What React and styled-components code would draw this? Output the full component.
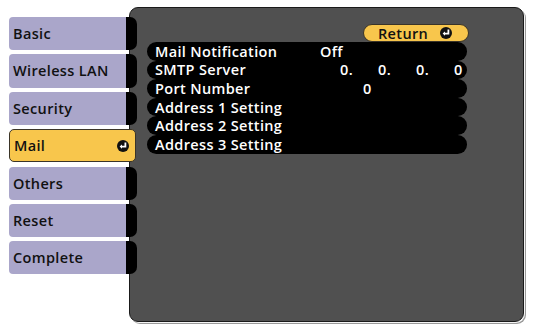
import React from "react";
import styled, { createGlobalStyle } from "styled-components";

const Global = createGlobalStyle`
  html, body { margin: 0; padding: 0; background: #ffffff; }
  body { font-family: "Open Sans", "DejaVu Sans", sans-serif; }
`;

const Screen = styled.div`
  display: flex;
  align-items: flex-start;
  width: 534px;
  height: 327px;
  padding: 7px 0 0 9px;
  box-sizing: border-box;
`;

const TabColumn = styled.div`
  display: flex;
  flex-direction: column;
  gap: 4.2px;
  width: 128px;
  padding-top: 10px;
  position: relative;
  z-index: 2;
  flex: none;
`;

const Tab = styled.div`
  box-sizing: border-box;
  height: 33.2px;
  width: ${(p) => (p.$active ? "127px" : "128px")};
  display: flex;
  align-items: center;
  justify-content: space-between;
  padding: 0 6px 0 4px;
  font-size: 14.5px;
  font-weight: 600;
  letter-spacing: 0.35px;
  color: #111;
  border-radius: ${(p) => (p.$active ? "5px" : "4px 7px 7px 4px")};
  background: ${(p) =>
    p.$active
      ? "#f8c64c"
      : "linear-gradient(to right, #aaa6ca 0, #aaa6ca 117px, #000 117px)"};
  border: ${(p) => (p.$active ? "1px solid #3a3428" : "none")};
`;

const Panel = styled.div`
  box-sizing: border-box;
  margin-left: -8px;
  width: 395px;
  height: 315px;
  background: #505050;
  border: 1px solid #1a1a1a;
  border-radius: 9px;
  box-shadow: 1px 1px 0 #f4f4f4, 2px 2px 0 #9a9a9a;
  display: flex;
  flex-direction: column;
  padding: 16px 0 0 17px;
`;

const Content = styled.div`
  width: 320px;
  display: flex;
  flex-direction: column;
`;

const ReturnButton = styled.div`
  align-self: flex-end;
  margin-right: -2px;
  box-sizing: border-box;
  width: 106px;
  height: 18px;
  border-radius: 9px;
  background: #f8c64c;
  border: 1px solid #3a3428;
  display: flex;
  align-items: center;
  gap: 12px;
  padding-left: 14px;
  font-size: 14.5px;
  font-weight: 600;
  letter-spacing: 0.35px;
  color: #111;
`;

const Rows = styled.div`
  display: flex;
  flex-direction: column;
`;

const Row = styled.div`
  height: 18.6px;
  border-radius: 9.3px;
  background: #000;
  display: flex;
  align-items: center;
  color: #fff;
  font-size: 14.5px;
  font-weight: 600;
  letter-spacing: 0.35px;
  padding-left: 8px;
`;

const Label = styled.span`
  width: 165px;
  flex: none;
  white-space: nowrap;
`;

const Value = styled.span`
  padding-left: ${(p) => p.$indent || 0}px;
  display: flex;
`;

const Octet = styled.span`
  width: 38px;
`;

function EnterIcon({ size = 12 }) {
  return (
    <svg width={size} height={size} viewBox="0 0 12 12">
      <circle cx="6" cy="6" r="6" fill="#111" />
      <path d="M8.4 2.6 V6.6 H4.2" stroke="#fff" strokeWidth="1.8" fill="none" />
      <path d="M2.6 6.6 L5 4.4 V8.8 Z" fill="#fff" />
    </svg>
  );
}

const tabs = ["Basic", "Wireless LAN", "Security", "Mail", "Others", "Reset", "Complete"];

export default function App() {
  return (
    <>
      <Global />
      <Screen>
        <TabColumn>
          {tabs.map((t) => (
            <Tab key={t} $active={t === "Mail"}>
              <span>{t}</span>
              {t === "Mail" && <EnterIcon size={12} />}
            </Tab>
          ))}
        </TabColumn>
        <Panel>
          <Content>
            <ReturnButton>
              <span>Return</span>
              <EnterIcon size={12} />
            </ReturnButton>
            <Rows>
              <Row>
                <Label>Mail Notification</Label>
                <Value>Off</Value>
              </Row>
              <Row>
                <Label>SMTP Server</Label>
                <Value $indent={20}>
                  <Octet>0.</Octet>
                  <Octet>0.</Octet>
                  <Octet>0.</Octet>
                  <Octet>0</Octet>
                </Value>
              </Row>
              <Row>
                <Label>Port Number</Label>
                <Value $indent={43}>0</Value>
              </Row>
              <Row>
                <Label>Address 1 Setting</Label>
              </Row>
              <Row>
                <Label>Address 2 Setting</Label>
              </Row>
              <Row>
                <Label>Address 3 Setting</Label>
              </Row>
            </Rows>
          </Content>
        </Panel>
      </Screen>
    </>
  );
}
